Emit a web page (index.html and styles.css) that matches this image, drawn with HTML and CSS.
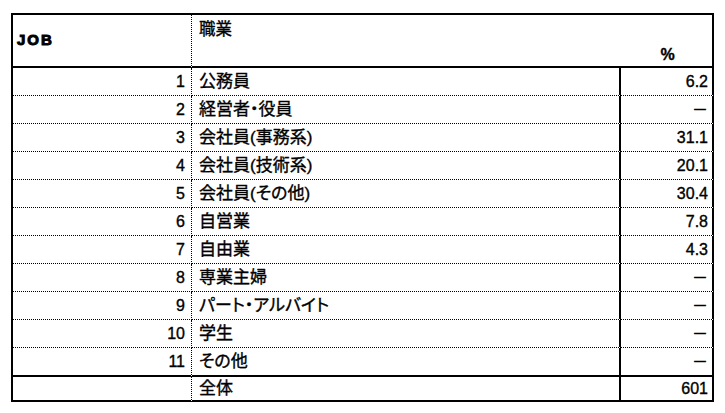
FILE: index.html
```html
<!DOCTYPE html>
<html lang="ja">
<head>
<meta charset="utf-8">
<title>職業</title>
<link rel="stylesheet" href="styles.css">
</head>
<body>
<table class="tbl">
  <colgroup>
    <col class="c-no">
    <col class="c-name">
    <col class="c-val">
  </colgroup>
  <thead>
    <tr class="head">
      <th class="h-job">JOB</th>
      <th class="h-name">職業</th>
      <th class="h-pct">%</th>
    </tr>
  </thead>
  <tbody>
    <tr class="row"><td class="no">1</td><td class="name">公務員</td><td class="val">6.2</td></tr>
    <tr class="row"><td class="no">2</td><td class="name">経営者・役員</td><td class="val">－</td></tr>
    <tr class="row"><td class="no">3</td><td class="name">会社員(事務系)</td><td class="val">31.1</td></tr>
    <tr class="row"><td class="no">4</td><td class="name">会社員(技術系)</td><td class="val">20.1</td></tr>
    <tr class="row"><td class="no">5</td><td class="name">会社員(その他)</td><td class="val">30.4</td></tr>
    <tr class="row"><td class="no">6</td><td class="name">自営業</td><td class="val">7.8</td></tr>
    <tr class="row"><td class="no">7</td><td class="name">自由業</td><td class="val">4.3</td></tr>
    <tr class="row"><td class="no">8</td><td class="name">専業主婦</td><td class="val">－</td></tr>
    <tr class="row"><td class="no">9</td><td class="name">パート・アルバイト</td><td class="val">－</td></tr>
    <tr class="row"><td class="no">10</td><td class="name">学生</td><td class="val">－</td></tr>
    <tr class="row last"><td class="no">11</td><td class="name">その他</td><td class="val">－</td></tr>
    <tr class="total"><td class="no"></td><td class="name">全体</td><td class="val">601</td></tr>
  </tbody>
</table>
</body>
</html>
```
FILE: styles.css
```css
html, body {
  margin: 0;
  padding: 0;
  background: #ffffff;
}

body {
  font-family: "Liberation Sans", "Noto Sans CJK JP", sans-serif;
  font-size: 16px;
  color: #000000;
}

.tbl {
  margin: 13px 0 0 11px;
  border-collapse: separate;
  border-spacing: 0;
  table-layout: fixed;
  width: 703px;
  border-left: 2px solid #000;
  border-top: 2px solid #000;
  font-feature-settings: "palt";
}

.c-no { width: 179px; }
.c-name { width: 429px; }
.c-val { width: 93px; }

.tbl th,
.tbl td {
  box-sizing: border-box;
  padding: 0;
  white-space: nowrap;
  line-height: 20px;
  font-weight: normal;
  -webkit-text-stroke: 0.35px #000;
}

.tbl .h-job,
.tbl .no {
  border-right: 1px dotted #000;
}

.tbl .name,
.tbl .val,
.tbl .h-pct {
  border-right: 2px solid #000;
}

.tbl .head th {
  height: 53px;
  border-bottom: 2px solid #000;
}

.tbl .h-job {
  text-align: left;
  vertical-align: middle;
  padding-left: 4px;
  padding-bottom: 2px;
  font-weight: bold;
  font-size: 15px;
  letter-spacing: 2px;
  -webkit-text-stroke: 1px #000;
}

.tbl .h-name {
  text-align: left;
  vertical-align: top;
  padding: 4px 0 0 7px;
  font-size: 16.5px;
}

.tbl .h-pct {
  text-align: center;
  vertical-align: bottom;
  padding-bottom: 1px;
  padding-left: 2px;
  font-weight: bold;
}

.tbl .row td {
  height: 28px;
  border-bottom: 1px dotted #000;
  vertical-align: middle;
}

.tbl .row.last td {
  height: 29px;
  border-bottom: 2px solid #000;
}

.tbl .total td {
  height: 25px;
  border-bottom: 2px solid #000;
  vertical-align: middle;
}

.tbl .no {
  text-align: right;
  padding-right: 6px;
}

.tbl .name {
  text-align: left;
  padding-left: 7px;
  font-size: 17px;
}

.tbl .val {
  text-align: right;
  padding-right: 4px;
}
```
